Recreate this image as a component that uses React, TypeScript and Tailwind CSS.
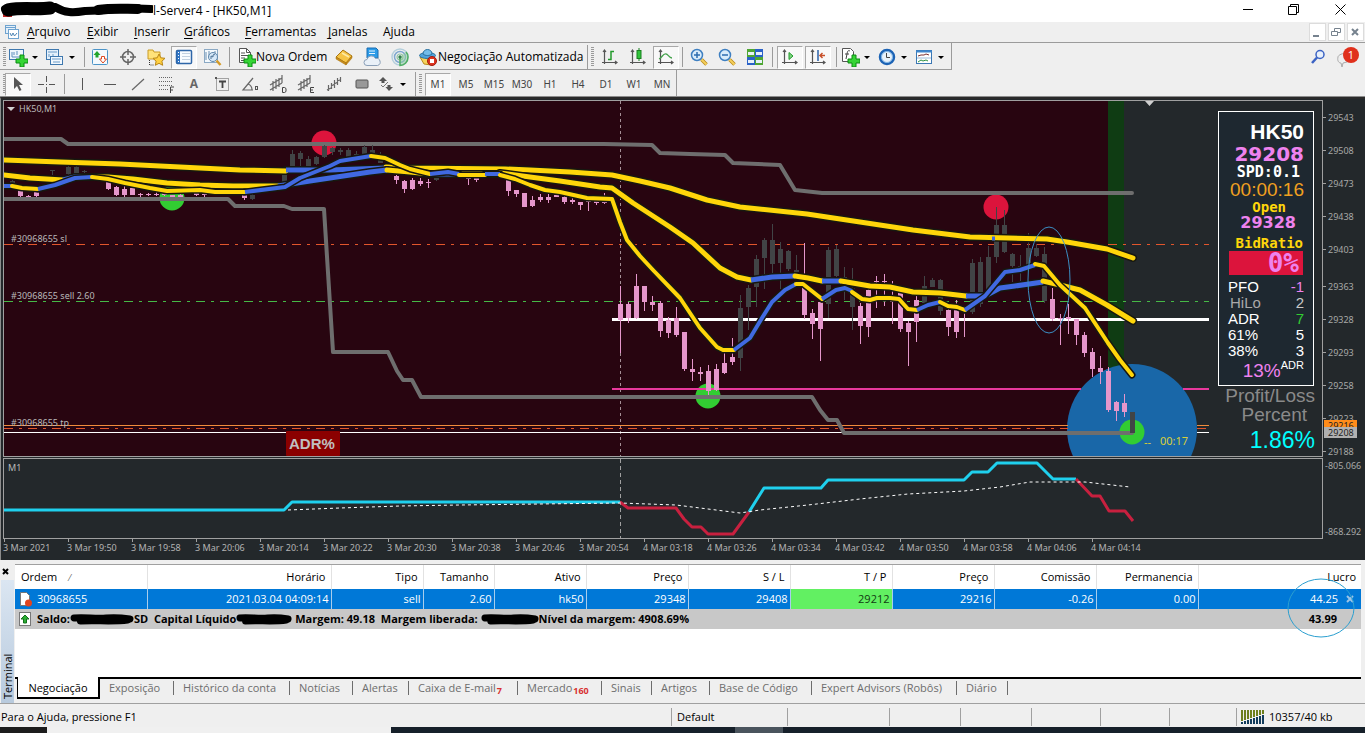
import { ReactNode } from 'react'

type Candle = [x: number, top: number, bottom: number, high: number, low: number]
type Segment = [color: 'y' | 'b', points: string]

const UP = '#414446'
const DOWN = '#e596cb'

const upCandles: Candle[] = [
  [12, 181, 183, 180, 184],
  [52, 170, 171, 170, 175],
  [68, 167, 174, 166, 176],
  [76, 167, 173, 166, 174],
  [84, 171, 172, 170, 173],
  [252, 195, 199, 194, 200],
  [284, 175, 182, 172, 182],
  [292, 154, 166, 150, 167],
  [300, 153, 159, 151, 166],
  [308, 159, 166, 156, 166],
  [316, 157, 164, 156, 165],
  [324, 146, 157, 145, 158],
  [332, 148, 152, 147, 155],
  [340, 150, 152, 148, 155],
  [348, 150, 157, 148, 158],
  [356, 154, 155, 151, 158],
  [364, 147, 154, 145, 154],
  [372, 150, 153, 145, 153],
  [380, 158, 163, 152, 163],
  [436, 178, 180, 177, 181],
  [740, 308, 358, 295, 371],
  [748, 288, 307, 285, 330],
  [756, 259, 287, 255, 307],
  [764, 240, 258, 238, 289],
  [772, 240, 264, 224, 273],
  [780, 249, 263, 242, 289],
  [788, 251, 269, 250, 271],
  [796, 270, 272, 255, 273],
  [828, 250, 304, 247, 318],
  [836, 249, 276, 245, 277],
  [844, 277, 279, 267, 300],
  [852, 288, 307, 268, 330],
  [924, 286, 303, 276, 304],
  [932, 280, 287, 278, 287],
  [940, 280, 311, 279, 315],
  [972, 263, 312, 259, 314],
  [980, 262, 304, 257, 307],
  [988, 257, 290, 246, 291],
  [996, 225, 257, 207, 263],
  [1004, 225, 252, 210, 253],
  [1012, 254, 266, 253, 282],
  [1020, 266, 268, 255, 281],
  [1028, 248, 265, 233, 266],
  [1036, 248, 256, 244, 257],
  [1044, 254, 301, 247, 303],
]

const downCandles: Candle[] = [
  [20, 190, 196, 189, 197],
  [28, 196, 197, 195, 197],
  [36, 192, 196, 191, 198],
  [108, 182, 189, 181, 190],
  [116, 187, 195, 186, 196],
  [124, 189, 195, 186, 197],
  [132, 188, 195, 188, 195],
  [140, 194, 195, 193, 197],
  [148, 194, 195, 193, 196],
  [156, 194, 195, 192, 196],
  [164, 193, 195, 193, 196],
  [172, 195, 198, 195, 198],
  [180, 195, 198, 194, 198],
  [196, 193, 195, 193, 196],
  [204, 194, 195, 194, 197],
  [244, 195, 198, 194, 200],
  [396, 176, 180, 175, 184],
  [404, 181, 189, 180, 193],
  [412, 180, 189, 178, 190],
  [420, 181, 184, 178, 186],
  [428, 182, 183, 179, 188],
  [468, 178, 179, 178, 185],
  [476, 178, 180, 178, 182],
  [508, 180, 191, 178, 196],
  [516, 190, 194, 190, 197],
  [524, 193, 207, 193, 207],
  [532, 200, 206, 196, 207],
  [540, 197, 200, 194, 202],
  [548, 197, 200, 194, 203],
  [556, 195, 197, 194, 197],
  [564, 197, 202, 195, 204],
  [572, 200, 202, 198, 204],
  [580, 202, 205, 202, 210],
  [588, 201, 202, 201, 211],
  [596, 201, 203, 200, 205],
  [604, 202, 203, 193, 204],
  [620, 304, 320, 286, 353],
  [628, 304, 318, 302, 323],
  [636, 286, 318, 274, 319],
  [644, 286, 302, 286, 311],
  [652, 302, 305, 296, 311],
  [660, 303, 331, 301, 337],
  [668, 320, 333, 317, 338],
  [676, 318, 335, 307, 337],
  [684, 332, 369, 332, 371],
  [692, 369, 372, 359, 381],
  [700, 372, 374, 367, 381],
  [708, 371, 391, 365, 395],
  [716, 369, 390, 364, 391],
  [724, 363, 373, 353, 374],
  [732, 357, 362, 338, 365],
  [804, 287, 315, 243, 319],
  [812, 313, 324, 309, 339],
  [820, 302, 329, 300, 361],
  [860, 306, 326, 303, 344],
  [868, 290, 327, 288, 337],
  [876, 281, 282, 276, 308],
  [884, 281, 282, 274, 306],
  [892, 301, 302, 281, 324],
  [900, 293, 329, 292, 332],
  [908, 323, 332, 321, 366],
  [916, 300, 322, 295, 342],
  [948, 310, 327, 306, 336],
  [956, 310, 332, 300, 338],
  [964, 308, 309, 306, 337],
  [1052, 299, 319, 288, 321],
  [1060, 318, 319, 314, 345],
  [1068, 317, 319, 304, 334],
  [1076, 319, 335, 319, 345],
  [1084, 335, 353, 332, 357],
  [1092, 352, 369, 348, 377],
  [1100, 368, 372, 356, 384],
  [1108, 371, 410, 367, 412],
  [1116, 402, 411, 401, 421],
  [1124, 403, 412, 394, 417],
]

const slowAverage: Segment[] = [
  ['y', '4,160 60,162 120,164 180,167 240,170 286,171'],
  ['b', '286,170 330,170 386,168'],
  ['y', '386,167 410,168 505,169 530,170 570,172 612,175 640,181 670,188 707,200 740,207 807,214 860,222 913,230 970,237 1047,239 1067,242 1107,249 1133,258'],
]

const midAverage: Segment[] = [
  ['y', '4,175 30,178 63,180'],
  ['b', '63,180 75,177 92,177'],
  ['y', '92,177 108,177 133,179 167,183 200,185 233,186 278,186'],
  ['b', '278,186 310,181 330,178 370,172 387,170'],
  ['y', '387,170 410,172 430,174'],
  ['b', '430,174 459,174'],
  ['y', '459,174 485,174'],
  ['b', '485,174 500,174'],
  ['y', '500,173 530,177 560,181 600,187 612,188 633,203 670,227 693,243 720,268 737,277 751,280'],
  ['b', '751,280 772,277 795,276'],
  ['y', '795,276 808,278 822,281'],
  ['b', '822,281 841,281'],
  ['y', '841,281 870,286 890,287 913,292 940,293 966,296'],
  ['b', '966,296 985,296 1000,288 1015,286 1043,282'],
  ['y', '1043,281 1060,285 1080,290 1107,305 1133,321'],
]

const fastAverage: Segment[] = [
  ['b', '4,186 12,186'],
  ['y', '12,186 22,188 38,189'],
  ['b', '38,189 55,185 75,178 92,177'],
  ['y', '92,177 108,179 125,183 150,188 167,191 200,190 215,192 245,192'],
  ['b', '245,192 285,187 300,178 330,166 340,161 371,156'],
  ['y', '371,156 385,158 400,165 410,169 430,174'],
  ['b', '430,174 448,172 459,174'],
  ['y', '459,175 485,175'],
  ['b', '485,174 500,174'],
  ['y', '500,175 515,179 530,185 545,190 560,192 587,198 612,199 620,222 627,240 640,256 653,270 680,298 700,328 717,347 723,350 734,350'],
  ['b', '734,350 750,338 762,318 772,302 785,290 796,284'],
  ['y', '796,284 803,284 822,299'],
  ['b', '822,299 836,290 845,288 852,291'],
  ['y', '852,292 862,299 870,300 877,298 890,298 899,299 908,309 917,310'],
  ['b', '917,310 928,305 940,302'],
  ['y', '940,302 948,306 957,307 965,310'],
  ['b', '965,310 985,296 1005,272 1020,270 1035,265'],
  ['y', '1035,264 1044,266 1060,285 1085,308 1108,343 1120,360 1132,375'],
]

const priceLabels = [
  [29543, 117],
  [29508, 150],
  [29473, 183],
  [29438, 216],
  [29403, 249],
  [29363, 286],
  [29328, 319],
  [29293, 352],
  [29258, 385],
  [29223, 418],
  [29188, 451],
]

const timeLabels = [
  '3 Mar 2021',
  '3 Mar 19:50',
  '3 Mar 19:58',
  '3 Mar 20:06',
  '3 Mar 20:14',
  '3 Mar 20:22',
  '3 Mar 20:30',
  '3 Mar 20:38',
  '3 Mar 20:46',
  '3 Mar 20:54',
  '4 Mar 03:18',
  '4 Mar 03:26',
  '4 Mar 03:34',
  '4 Mar 03:42',
  '4 Mar 03:50',
  '4 Mar 03:58',
  '4 Mar 04:06',
  '4 Mar 04:14',
]

/* ---------- icons ---------- */

function Icon({ children, size = 'h-5 w-5' }: { children: ReactNode; size?: string }) {
  return (
    <svg viewBox="0 0 20 20" className={`${size} shrink-0`} fill="none" aria-hidden="true">
      {children}
    </svg>
  )
}

const Plus = () => (
  <path d="M12 8h4v4h4v4h-4v4h-4v-4H8v-4h4z" fill="#35d435" stroke="#0b8a12" />
)

const NewChartIcon = () => (
  <Icon>
    <rect x="1.5" y="2.5" width="14" height="10" fill="#eef6fd" stroke="#3f78ae" />
    <path d="M4 5v5h9M6 5v3M9 4v4" stroke="#5c8fbd" />
    <Plus />
  </Icon>
)

const ProfilesIcon = () => (
  <Icon>
    <rect x="1.5" y="2.5" width="12" height="10" fill="#e4f0fb" stroke="#3f78ae" />
    <path d="M3 5h9M4 7v3M8 7v3" stroke="#6a9bc8" />
    <rect x="5.500" y="9.500" width="12" height="8" fill="#f2f8fe" stroke="#3f78ae" />
    <path d="M7 12h9M8 15h7" stroke="#6a9bc8" />
  </Icon>
)

const MarketWatchIcon = () => (
  <Icon>
    <rect x="2.500" y="2.500" width="15" height="15" rx="1" fill="#f4f9fd" stroke="#4c94c8" />
    <path d="M7 4l3.500 4H8.500v2.500h-3V8H3.500z" fill="#24a52c" />
    <path d="M13 16l-3.500-4h2V9.500h3V12h2z" fill="#fff" stroke="#dd4a22" />
  </Icon>
)

const TargetIcon = () => (
  <Icon>
    <circle cx="10" cy="10" r="5.500" stroke="#666" strokeWidth="1.500" />
    <path d="M10 2v6M10 12v6M2 10h6M12 10h6" stroke="#666" strokeWidth="1.500" />
  </Icon>
)

const FavoritesIcon = () => (
  <Icon>
    <path d="M2 3h5l1 2h6v7H2z" fill="#ffe27a" stroke="#c99a24" />
    <path d="M3.500 13v5h4" stroke="#333" strokeDasharray="1 1" />
    <path d="M13 7l1.800 3.800 4.200.5-3.100 2.900.8 4.100L13 16.300l-3.700 2 .8-4.100L7 11.300l4.200-.5z" fill="#ffd042" stroke="#b98616" />
  </Icon>
)

const TerminalIcon = () => (
  <Icon>
    <rect x="2.500" y="3.500" width="15" height="13" rx="1" fill="#f7fbff" stroke="#2e66a8" strokeWidth="1.500" />
    <rect x="3" y="4" width="3" height="12" fill="#2f74c4" />
    <path d="M8 6.500h8M8 9.500h8M8 12.500h8" stroke="#c1d0e0" />
    <path d="M4.500 5v10" stroke="#fff" strokeDasharray="1 2" />
  </Icon>
)

const TesterIcon = () => (
  <Icon>
    <rect x="2.500" y="2.500" width="13" height="13" fill="#f4f9fd" stroke="#8ba9c4" />
    <path d="M4 5v8M7 4v6M13 4v5" stroke="#6a8fb2" />
    <circle cx="11" cy="10" r="4.500" fill="#cfe5f7" fillOpacity=".8" stroke="#5f87ab" />
    <path d="M9 12V9l2 1V8l2-1" stroke="#4d7396" />
    <path d="M14.500 13.500l4 4.500" stroke="#d49a27" strokeWidth="2.500" />
  </Icon>
)

const NewOrderIcon = () => (
  <Icon>
    <path d="M3.500 1.500h7l4 4v10h-11z" fill="#fff" stroke="#555" />
    <path d="M10.500 1.500v4h4M5 6h4M5 8.500h7M5 11h4M5 13.500h3" stroke="#555" />
    <Plus />
  </Icon>
)

const BookIcon = () => (
  <Icon>
    <path d="M9 3l9 6-6 7-10-6z" fill="#f6c445" stroke="#a87512" />
    <path d="M2 10v2l10 6v-2zM12 16v2l6-7V9z" fill="#c98d1a" stroke="#a87512" strokeWidth=".5" />
    <path d="M8 6l7 4" stroke="#fdeaa6" strokeWidth="1.500" />
  </Icon>
)

const CloudIcon = () => (
  <Icon>
    <path d="M5 1h9l2 2v8H5z" fill="#2b9be8" stroke="#1a6db0" />
    <path d="M7 4h6M7 6.500h6" stroke="#e6f4ff" />
    <path d="M5 18.500a3 3 0 0 1 0-6 4.500 4.500 0 0 1 8.500-1 3.500 3.500 0 0 1 2 7z" fill="#e9f0f8" stroke="#8a9fb8" />
  </Icon>
)

const SignalIcon = () => (
  <Icon>
    <circle cx="10" cy="10" r="8" stroke="#b4cfdc" strokeWidth="1.500" />
    <circle cx="10" cy="10" r="5.500" stroke="#7ea7cf" strokeWidth="1.500" />
    <circle cx="10" cy="10" r="3" stroke="#8fc3a3" strokeWidth="1.200" />
    <path d="M10 10v8.500c4 0 8-3 8-8.500 0-2-1-4-2-5" fill="#8fd09c" fillOpacity=".5" stroke="#4fae64" strokeWidth="1.500" />
    <circle cx="10" cy="10" r="1.700" fill="#2e7d4d" />
  </Icon>
)

const AutoTradingIcon = () => (
  <Icon>
    <path d="M2 10h14l-3 8-7-1z" fill="#f5d35a" stroke="#b98a1c" />
    <ellipse cx="9.500" cy="8.500" rx="8" ry="3" fill="#4ea3dc" stroke="#2a719f" />
    <path d="M5 7c0-6 9-6 9 0-2 2-7 2-9 0z" fill="#74bdea" stroke="#2a719f" />
    <circle cx="14" cy="14" r="4.500" fill="#dc3420" stroke="#a31a0d" />
    <rect x="12" y="12" width="4" height="4" fill="#fff" />
  </Icon>
)

const Axes = () => (
  <path d="M4.500 3v14M2 15.500h15M3 5l1.500-2L6 5M15 14l2 1.500-2 1.500" stroke="#555" strokeWidth="1.200" />
)

const BarsIcon = () => (
  <Icon>
    <Axes />
    <path d="M8 12.500h3v-8h3" stroke="#239a2c" strokeWidth="1.500" />
  </Icon>
)

const CandlesIcon = () => (
  <Icon>
    <Axes />
    <path d="M11 1v13" stroke="#19801f" />
    <rect x="9" y="3.500" width="4" height="8" fill="#32c43c" stroke="#19801f" />
  </Icon>
)

const LineIcon = () => (
  <Icon>
    <Axes />
    <path d="M3 12c3-1 4-6 7-5 2 0 3 4 6 4" stroke="#45a24c" strokeWidth="1.300" />
  </Icon>
)

function ZoomIcon({ plus = false }) {
  return (
    <Icon>
      <path d="M12.500 12.500l5 5" stroke="#b98a1c" strokeWidth="3.500" />
      <path d="M12.500 12.500l5 5" stroke="#f5cf5c" strokeWidth="2" />
      <circle cx="8" cy="8" r="5.500" fill="#d9ecfb" stroke="#3e7fc1" strokeWidth="1.500" />
      <path d={plus ? 'M5 8h6M8 5v6' : 'M5 8h6'} stroke="#2c6cb0" strokeWidth="1.500" />
    </Icon>
  )
}

const TileIcon = () => (
  <Icon>
    <rect x="2" y="2" width="8" height="8" fill="#4ea633" />
    <rect x="10" y="2" width="8" height="8" fill="#2a62c8" />
    <rect x="2" y="10" width="8" height="8" fill="#2a62c8" />
    <rect x="10" y="10" width="8" height="8" fill="#4ea633" />
    <path d="M3 5h6v3H3zM11 5h6v3h-6zM3 13h6v3H3zM11 13h6v3h-6z" fill="#e8f1f8" />
  </Icon>
)

const ScrollIcon = () => (
  <Icon>
    <Axes />
    <path d="M9 5.500v7l4-3.500z" fill="#7bd47f" stroke="#239a2c" />
  </Icon>
)

const ShiftIcon = () => (
  <Icon>
    <Axes />
    <path d="M10 3v11" stroke="#2b62a8" strokeWidth="1.500" />
    <path d="M12 8.500h5M14.500 6L12 8.500l2.500 2.500" stroke="#c8502a" strokeWidth="1.500" />
  </Icon>
)

const IndicatorsIcon = () => (
  <Icon>
    <path d="M2.500 1.500h8l3 3v10h-11z" fill="#fff" stroke="#555" />
    <path d="M10 4C8 3 7.500 4 7 7l-1 5M5 7h4" stroke="#444" />
    <Plus />
  </Icon>
)

const ClockIcon = () => (
  <Icon>
    <circle cx="10" cy="10" r="7" fill="#e9f2fa" stroke="#1c63b5" strokeWidth="2.500" />
    <circle cx="10" cy="10" r="5.500" stroke="#7db4e6" />
    <path d="M9.500 6v4.500H13" stroke="#444" />
  </Icon>
)

const TemplateIcon = () => (
  <Icon>
    <rect x="2.500" y="3.500" width="15" height="13" fill="#fff" stroke="#3b77b3" />
    <path d="M2 4.500h16" stroke="#3f86cc" strokeWidth="2" />
    <path d="M4 9l3-1h3l2-1 3 1" stroke="#7a3030" />
    <path d="M3 11h14" stroke="#9dbbd8" />
    <path d="M4 15l3-2 2 1 3-1 2 1" stroke="#2d9140" />
  </Icon>
)

const CursorIcon = () => (
  <Icon>
    <path d="M6 3v12l3-3 2.500 5 2-1-2.500-5h4z" fill="#555" />
  </Icon>
)

const CrosshairIcon = () => (
  <Icon>
    <path d="M10.500 2v6M10.500 13v6M2 10.500h6M13 10.500h6M10 10.500h1" stroke="#555" />
  </Icon>
)

const FiboIcon = () => (
  <Icon>
    <path d="M3 3.500h14M3 7.500h14M3 11.500h14M3 15.500h9" stroke="#666" strokeDasharray="1 1" />
    <path d="M14.500 19v-6H18M14.500 16H17" stroke="#444" />
  </Icon>
)

const TextLabelIcon = () => (
  <Icon>
    <rect x="4.500" y="4.500" width="12" height="12" stroke="#555" strokeDasharray="1 1" />
    <path d="M7 7.500h7M10.500 7v7" stroke="#444" strokeWidth="1.800" />
    <path d="M3 3h2v2H3z" fill="#555" />
  </Icon>
)

const AngleIcon = () => (
  <Icon>
    <path d="M13 4L3 16h10M8 10c3 1 4 3 4 6" stroke="#666" strokeWidth="1.200" />
    <rect x="15.500" y="12.500" width="2" height="3" stroke="#555" />
  </Icon>
)

function ChannelIcon({ mark }: { mark?: 'D' | 'E' }) {
  return (
    <Icon>
      <path d="M2 11L14 4M2 16L14 9M5 7v10M8 5v10M11 4v9M14 1v8" stroke="#666" strokeWidth="1.200" />
      {mark === 'D' && <path d="M14.500 13.500v5h2l1.500-1v-3l-1.500-1z" stroke="#444" />}
      {mark === 'E' && <path d="M18 13.500h-3.500v5H18M14.500 16H17" stroke="#444" />}
    </Icon>
  )
}

const WavesIcon = () => (
  <Icon>
    <path d="M4.500 17v-6M3 16l4-2M7.500 15V9M7 12l4-2M10.500 14V6M10 10l4-2M13.500 11V4M13 7l3-1M16.500 8V3" stroke="#666" strokeWidth="1.200" />
  </Icon>
)

const ArrowsIcon = () => (
  <Icon>
    <path d="M3 7l4-4 4 4H8.500v2h-3V7z" fill="#555" />
    <path d="M9.500 13h2v-2h3v2h2.500l-4 4z" fill="#555" />
    <path d="M5 11l2 2 5-5" stroke="#777" />
  </Icon>
)

/* ---------- toolbar pieces ---------- */

const Grip = () => (
  <span className="flex h-6 w-2 shrink-0 items-center justify-center" aria-hidden="true">
    <span className="h-5 w-[3px] bg-[repeating-linear-gradient(#9a9a9a_0_1px,#efefef_1px_2px)]" />
  </span>
)

function Sep({ width = 'w-1' }: { width?: string }) {
  return (
    <span className={`${width} flex h-6 shrink-0 items-center justify-center`} aria-hidden="true">
      <span className="h-5 w-px bg-[#9b9b9b]" />
    </span>
  )
}

interface ToolProps {
  label: string
  active?: boolean
  menu?: boolean
  children: ReactNode
}

function Tool({ label, active, menu, children }: ToolProps) {
  return (
    <button
      aria-label={label}
      aria-pressed={active}
      className={`flex h-6 shrink-0 items-center ${menu ? 'w-[37px] justify-start' : 'w-7 justify-center'}`}
    >
      {active ? (
        <span className="flex h-[23px] w-[26px] items-center justify-center border border-[#a8a8a8] border-r-white border-b-white bg-[#f8f8f8]">
          {children}
        </span>
      ) : (
        children
      )}
      {menu && (
        <span className="ml-1 border-x-[3px] border-t-[3px] border-x-transparent border-t-black" />
      )}
    </button>
  )
}

function TitleBar() {
  return (
    <header className="flex h-[22px] items-center justify-between bg-white">
      <div className="flex items-center">
        <svg className="h-[22px] w-[153px]" aria-hidden="true">
          <path d="M3 13h9v4H3z" fill="#c42424" />
          <path
            d="M5 9c15-4 35-2 50-2 10 6 18 6 30 4 20 0 25-2 38-3l28 1"
            fill="none"
            stroke="#000"
            strokeWidth="8"
            strokeLinecap="round"
          />
          <path d="M8 10c16-3 28 0 42-2" fill="none" stroke="#000" strokeWidth="13" strokeLinecap="round" />
          <path d="M98 10c14-2 26-1 40-1" fill="none" stroke="#000" strokeWidth="10" strokeLinecap="round" />
        </svg>
        <h1 className="text-xs leading-4">l-Server4 - [HK50,M1]</h1>
      </div>
      <div className="flex items-center pr-px pb-1">
        <button aria-label="Minimizar" className="flex w-[46px] justify-center">
          <span className="h-px w-[10px] bg-black" />
        </button>
        <button aria-label="Restaurar" className="flex w-[45px] justify-center">
          <svg className="h-[11px] w-[11px]" fill="none" stroke="#000">
            <path d="M.5 2.500h8v8h-8zM2.500 2.500v-2h8v8h-2" />
          </svg>
        </button>
        <button aria-label="Fechar" className="flex w-12 justify-center">
          <svg className="h-[11px] w-[11px]" fill="none" stroke="#000">
            <path d="M.5.5l10 10M10.500.5l-10 10" />
          </svg>
        </button>
      </div>
    </header>
  )
}

function MenuBar() {
  const items = [
    ['A', 'rquivo', 'w-[60px]'],
    ['E', 'xibir', 'w-[47px]'],
    ['I', 'nserir', 'w-[50px]'],
    ['G', 'ráficos', 'w-[61px]'],
    ['F', 'erramentas', 'w-[83px]'],
    ['J', 'anelas', 'w-[55px]'],
    ['', 'Ajuda', 'w-[50px]'],
  ]
  return (
    <nav className="flex h-[21px] items-center border-b border-[#9b9b9b]">
      <svg viewBox="0 0 16 16" className="mr-[7px] ml-1 h-4 w-4" fill="none" aria-hidden="true">
        <rect x="1.500" y="1.500" width="10" height="8" fill="#e4f0fb" stroke="#6fa3cf" />
        <path d="M1 3.500h11" stroke="#6fa3cf" />
        <rect x="4.500" y="5.500" width="10" height="9" fill="#fff" stroke="#6fa3cf" />
        <path d="M6 9l1.500 3L9 9l1.500 3L13 9" stroke="#4d84b3" />
      </svg>
      {items.map(([key, rest, width]) => (
        <button key={rest} className={`${width} text-left text-xs leading-4`}>
          <u className="underline-offset-2">{key}</u>
          {rest}
        </button>
      ))}
      <div className="ml-auto flex gap-[2px] pr-px">
        {['M3 12h6', 'M2.500 7.500h6v4h-6zM5.500 7v-2.500h6v4h-3', 'M4 5l6 6M10 5l-6 6'].map((d, i) => (
          <button
            key={d}
            aria-label={['Minimizar gráfico', 'Restaurar gráfico', 'Fechar gráfico'][i]}
            className="h-[18px] w-[17px] border border-[#dcdcdc] bg-white"
          >
            <svg viewBox="0 0 15 16" className="h-4 w-[15px]" fill="none" stroke="#76828e">
              <path d={d} strokeWidth={i === 1 ? 1 : 2} />
            </svg>
          </button>
        ))}
      </div>
    </nav>
  )
}

function Toolbars() {
  const frames = ['M1', 'M5', 'M15', 'M30', 'H1', 'H4', 'D1', 'W1', 'MN']
  return (
    <div className="flex justify-between border-b border-[#8c8c8c]">
      <div>
        <div className="flex h-[27px] w-max items-start border-r border-b border-[#9b9b9b] pt-[2px]">
          <Grip />
          <Tool label="Novo gráfico" menu><NewChartIcon /></Tool>
          <Tool label="Perfis" menu><ProfilesIcon /></Tool>
          <Sep />
          <Tool label="Observação do mercado"><MarketWatchIcon /></Tool>
          <Tool label="Janela de dados"><TargetIcon /></Tool>
          <Tool label="Navegador"><FavoritesIcon /></Tool>
          <Tool label="Terminal" active><TerminalIcon /></Tool>
          <Tool label="Testador de estratégia"><TesterIcon /></Tool>
          <Sep width="w-[6px]" />
          <button className="flex h-6 w-[98px] items-center pl-1 text-xs whitespace-nowrap">
            <NewOrderIcon />
            Nova Ordem
          </button>
          <Tool label="MetaEditor"><BookIcon /></Tool>
          <Tool label="Hospedagem virtual"><CloudIcon /></Tool>
          <Tool label="Sinais"><SignalIcon /></Tool>
          <button className="flex h-6 w-[173px] items-center pl-1 text-xs whitespace-nowrap">
            <AutoTradingIcon />
            Negociação Automatizada
          </button>
          <span className="h-6 w-px bg-[#9b9b9b]" />
          <Grip />
          <Tool label="Gráfico de barras"><BarsIcon /></Tool>
          <Tool label="Candlesticks"><CandlesIcon /></Tool>
          <Tool label="Gráfico de linha" active><LineIcon /></Tool>
          <Sep width="w-[5px]" />
          <Tool label="Aumentar zoom"><ZoomIcon plus /></Tool>
          <Tool label="Diminuir zoom"><ZoomIcon /></Tool>
          <Tool label="Lado a lado"><TileIcon /></Tool>
          <Sep width="w-[7px]" />
          <Tool label="Rolagem automática" active><ScrollIcon /></Tool>
          <Tool label="Deslocar gráfico" active><ShiftIcon /></Tool>
          <Sep width="w-2" />
          <Tool label="Indicadores" menu><IndicatorsIcon /></Tool>
          <Tool label="Períodos" menu><ClockIcon /></Tool>
          <Tool label="Modelos" menu><TemplateIcon /></Tool>
        </div>
        <div className="flex h-[26px] w-max items-start border-r border-[#9b9b9b] pt-[2px]">
          <span className="-mr-1 flex"><Grip /></span>
          <Tool label="Cursor" active><CursorIcon /></Tool>
          <Tool label="Mira"><CrosshairIcon /></Tool>
          <Sep width="w-2" />
          <Tool label="Linha vertical"><Icon><path d="M10.500 4v12" stroke="#555" /></Icon></Tool>
          <Tool label="Linha horizontal"><Icon><path d="M4 10.500h12" stroke="#555" /></Icon></Tool>
          <Tool label="Linha de tendência"><Icon><path d="M4 16L16 5" stroke="#666" strokeWidth="1.200" /></Icon></Tool>
          <Tool label="Fibonacci"><FiboIcon /></Tool>
          <Tool label="Texto"><span className="text-xs font-bold text-[#666]">A</span></Tool>
          <Tool label="Etiqueta"><TextLabelIcon /></Tool>
          <Tool label="Ângulo"><AngleIcon /></Tool>
          <Tool label="Canal D"><ChannelIcon mark="D" /></Tool>
          <Tool label="Canal E"><ChannelIcon mark="E" /></Tool>
          <Tool label="Ondas"><WavesIcon /></Tool>
          <Tool label="Retângulo">
            <Icon><rect x="4" y="6" width="12" height="8" rx="1" fill="#999" stroke="#555" /></Icon>
          </Tool>
          <Tool label="Setas" menu><ArrowsIcon /></Tool>
          <span className="ml-[2px] h-6 w-px bg-[#9b9b9b]" />
          <Grip />
          {frames.map((f) => (
            <Tool key={f} label={f} active={f === 'M1'}>
              <span className="font-['Noto_Sans',sans-serif] text-[10px] text-[#444]">{f}</span>
            </Tool>
          ))}
        </div>
      </div>
      <div className="flex items-start gap-2 pt-[5px] pr-[6px]">
        <button aria-label="Pesquisar">
          <svg viewBox="0 0 18 18" className="h-[18px] w-[18px]" fill="none" stroke="#3b63c4" strokeWidth="1.500">
            <circle cx="11" cy="6.500" r="4" fill="#e8f0fb" />
            <path d="M8 9.500L3 15" strokeWidth="2.500" />
          </svg>
        </button>
        <button aria-label="Mensagens" className="relative h-5 w-6">
          <svg viewBox="0 0 24 20" className="h-5 w-6" fill="none">
            <path d="M3 9c0-2 5-4 9-4v9l-4 1-1 4-1-4c-2 0-4-2-3-6z" fill="#eee" stroke="#aaa" />
          </svg>
          <span className="absolute -top-px right-0 h-4 w-4 rounded-full bg-[#e0301c] text-center text-[11px] leading-4 text-white">
            1
          </span>
        </button>
      </div>
    </div>
  )
}

/* ---------- chart ---------- */

function Average({ segments, width }: { segments: Segment[]; width: number }) {
  return (
    <g fill="none" strokeLinejoin="round">
      {segments.map(([, points]) => (
        <polyline key={points} points={points} stroke="#171810" strokeWidth={width + 3} strokeLinecap="round" />
      ))}
      {segments.map(([color, points]) => (
        <polyline
          key={points}
          points={points}
          stroke={color === 'y' ? '#ffd60a' : '#4169e1'}
          strokeWidth={width}
          strokeLinecap={color === 'y' ? 'round' : 'butt'}
        />
      ))}
    </g>
  )
}

function Candles({ data, color }: { data: Candle[]; color: string }) {
  return (
    <g fill={color} shapeRendering="crispEdges">
      {data.map(([x, top, bottom, high, low]) => (
        <g key={x}>
          <rect x={x} y={high} width="1" height={low - high} />
          <rect x={x - 2} y={top} width="5" height={bottom - top} />
        </g>
      ))}
    </g>
  )
}

function PriceChart() {
  return (
    <svg className="block h-[355px] w-full" role="img" aria-label="HK50,M1">
      <g transform="translate(-4 -101)">
        <rect x="4" y="101" width="1104" height="356" fill="#280510" />
        <rect x="1108" y="101" width="16" height="356" fill="#0f3c13" />
        <path d="M620.500 101v356" stroke="#a58f96" strokeDasharray="3 3" />
        <circle cx="1132" cy="429" r="65" fill="#1967a8" />
        <circle cx="172" cy="198" r="12.500" fill="#32cd32" />
        <circle cx="708" cy="396" r="12.500" fill="#32cd32" />
        <circle cx="1132" cy="432" r="12.500" fill="#32cd32" />
        <circle cx="324" cy="143" r="12.500" fill="#dc143c" />
        <circle cx="996" cy="207" r="12.500" fill="#dc143c" />
        <g strokeDasharray="9 6 3 6" shapeRendering="crispEdges">
          <path d="M4 244.500h1205" stroke="#e2562c" />
          <path d="M4 301.500h1205" stroke="#46b946" />
          <path d="M4 428.500h1064M1197 428.500h12" stroke="#e2562c" />
        </g>
        <g shapeRendering="crispEdges">
          <path d="M4 425.500h1064M1197 425.500h12" stroke="#f08c3c" />
          <path d="M4 432.500h1064M1197 432.500h12" stroke="#fff" />
        </g>
        <path d="M612 319.500h597" stroke="#fff" strokeWidth="3" />
        <path d="M612 389h469M1183 389h26" stroke="#e8389c" strokeWidth="2" />
        <g fill="none" stroke="#6e6e6e" strokeWidth="4" strokeLinejoin="round" strokeLinecap="round">
          <polyline points="4,139 61,139 68,144 604,144 652,145 660,153 690,154 725,155 733,163 780,165 795,190 822,193 1132,193" />
        </g>
        <Candles data={upCandles} color={UP} />
        <Candles data={downCandles} color={DOWN} />
        <polyline
          points="4,199 228,199 235,206 284,206 292,209 324,209 333,352 388,352 397,371 403,380 412,380 421,397 812,397 820,410 828,420 837,420 844,433 1132,433"
          fill="none"
          stroke="#6e6e6e"
          strokeWidth="4"
          strokeLinejoin="round"
          strokeLinecap="round"
        />
        <rect x="1130" y="412" width="5" height="21" fill={UP} />
        <Average segments={slowAverage} width={5} />
        <Average segments={midAverage} width={5} />
        <Average segments={fastAverage} width={4} />
        <path d="M992 238.500h3" stroke="#4169e1" strokeWidth="4" />
        <ellipse cx="1049" cy="280" rx="21" ry="53" fill="none" stroke="#3b8fc4" />
        <path d="M7 107h8l-4 4zM1145 101h9l-4.500 5z" fill="#d0d0d0" />
        <rect x="286" y="431" width="54" height="25" rx="1" fill="#8b0000" />
        <g fill="#b8b8b8" className="font-['Noto_Sans',sans-serif] text-[9px]">
          <text x="19" y="112">HK50,M1</text>
          <text x="11" y="242">#30968655 sl</text>
          <text x="11" y="299">#30968655 sell 2.60</text>
          <text x="11" y="426">#30968655 tp</text>
        </g>
        <text x="289" y="449" fill="#c0c0c0" className="font-['Liberation_Sans',Arial,sans-serif] text-[15px] font-bold">
          ADR%
        </text>
        <g fill="#d8cf3a" className="font-['Noto_Sans',sans-serif] text-[11px]">
          <text x="1144" y="446">--</text>
          <text x="1160" y="445">00:17</text>
        </g>
      </g>
    </svg>
  )
}

function IndicatorChart() {
  return (
    <svg className="block h-[79px] w-full" role="img" aria-label="M1">
      <g transform="translate(-4 -459)" fill="none">
        <path d="M620.500 459v80" stroke="#a0a0a0" strokeDasharray="4 3" />
        <g strokeWidth="3" strokeLinejoin="round">
          <polyline points="4,510 284,510 292,502 620,502" stroke="#1fd0ee" />
          <polyline points="620,502 628,508 676,508 684,519 692,527 701,527 708,534 733,534 749,512" stroke="#c8203f" />
          <polyline points="749,512 764,488 821,488 828,480 964,480 972,472 988,472 997,463 1037,463 1053,479 1076,479" stroke="#1fd0ee" />
          <polyline points="1076,479 1092,496 1100,496 1109,511 1125,511 1133,521" stroke="#c8203f" />
        </g>
        <polyline
          points="288,510 340,508 400,506 460,505 620,503 676,505 708,509 740,513 760,510 808,505 860,499 908,494 964,491 1000,487 1030,482 1085,482 1130,487"
          stroke="#fff"
          strokeDasharray="3 3"
        />
        <text x="8" y="471" fill="#b8b8b8" className="font-['Noto_Sans',sans-serif] text-[9px]">M1</text>
      </g>
    </svg>
  )
}

function PriceAxis() {
  return (
    <svg className="block h-[438px] w-[42px] font-['Noto_Sans',sans-serif] text-[9px]">
      <g transform="translate(-1323 -100)" fill="#a8a8a8">
        {priceLabels.map(([price, y]) => (
          <g key={price}>
            <path d={`M1323 ${y}.5h3`} stroke="#a0a0a0" />
            <text x="1328" y={y + 4}>{price}</text>
          </g>
        ))}
        <rect x="1324" y="420" width="33" height="11" fill="#ff8c1a" />
        <text x="1328" y="429" fill="#222">29216</text>
        <rect x="1324" y="427" width="33" height="11" fill="#b0b0b0" />
        <text x="1328" y="436" fill="#222">29208</text>
        <text x="1325" y="469">-805.066</text>
        <text x="1325" y="535">-868.292</text>
      </g>
    </svg>
  )
}

function QuotePanel() {
  const rows = [
    ['PFO', '-1', 'text-white', 'text-[#ee82ee]'],
    ['HiLo', '2', 'text-[#a9a9a9] pl-[2px]', 'text-[#c8c8c8]'],
    ['ADR', '7', 'text-white', 'text-[#32cd32]'],
    ['61%', '5', 'text-white', 'text-white'],
    ['38%', '3', 'text-white', 'text-white'],
  ]
  return (
    <aside className="absolute top-[10px] right-[8px] w-[96px] font-['Liberation_Sans',Arial,sans-serif]">
      <div className="h-[275px] border border-white bg-[#1e2830] px-[9px] pt-2 text-right">
        <div className="text-[21px] leading-6 font-bold text-white">HK50</div>
        <div className="font-['DejaVu_Sans',sans-serif] text-[20px] leading-5 font-bold text-[#ee82ee]">29208</div>
        <div className="pr-1 font-['DejaVu_Sans_Mono',monospace] text-[15px] leading-4 font-bold text-white">SPD:0.1</div>
        <div className="text-[19px] leading-5 text-[#f0a020]">00:00:16</div>
        <div className="pr-[18px] font-['DejaVu_Sans_Mono',monospace] text-[14px] leading-[14px] font-bold text-[#ffd60a]">Open</div>
        <div className="pr-2 font-['DejaVu_Sans',sans-serif] text-[16px] leading-[18px] font-bold text-[#ee82ee]">29328</div>
        <div className="pt-1 pr-px font-['DejaVu_Sans_Mono',monospace] text-[14px] leading-[14px] font-bold text-[#ffd60a]">BidRatio</div>
        <div className="mx-px mt-px mb-1 h-6 bg-[#dc143c] pr-1 font-['DejaVu_Sans_Mono',monospace] text-[26px] leading-6 font-bold text-[#ee82ee]">0%</div>
        <dl>
          {rows.map(([name, value, nameColor, valueColor]) => (
            <div key={name} className="flex justify-between text-[15px] leading-4">
              <dt className={nameColor}>{name}</dt>
              <dd className={valueColor}>{value}</dd>
            </div>
          ))}
        </dl>
        <div className="flex items-start justify-end leading-6">
          <span className="text-[19px]/6 text-[#ee82ee]">13%</span>
          <span className="text-[11px] leading-3 text-white">ADR</span>
        </div>
      </div>
      <div className="-mr-px text-right text-[19px] leading-[19px] whitespace-nowrap text-[#8a8a8a]">
        <div>Profit/Loss</div>
        <div className="pr-2">Percent</div>
      </div>
      <div className="-mr-px pt-1 text-right text-[23px] leading-6 text-[#00ffff]">1.86%</div>
    </aside>
  )
}

function ChartArea() {
  return (
    <main className="flex h-[463px] flex-col border-t-2 border-l border-[#2a2a2a] border-l-[#8c8c8c] bg-[#23282b]">
      <div className="flex pt-px pl-[2px]">
        <div className="min-w-0 flex-1">
          <div className="relative overflow-hidden border border-[#a0a0a0]">
            <PriceChart />
            <QuotePanel />
          </div>
          <div className="mt-px border border-[#a0a0a0]">
            <IndicatorChart />
          </div>
        </div>
        <PriceAxis />
      </div>
      <ol className="flex pl-[2px] font-['Noto_Sans',sans-serif] text-[9px] leading-3 text-[#b4b4b4]">
        {timeLabels.map((t) => (
          <li key={t} className="w-16 shrink-0 whitespace-nowrap">
            <span className="ml-px block h-[3px] w-px bg-[#a0a0a0]" />
            <span className="block">{t}</span>
          </li>
        ))}
      </ol>
    </main>
  )
}

/* ---------- terminal ---------- */

function Scribble({ width }: { width: string }) {
  return (
    <svg viewBox="0 0 60 14" preserveAspectRatio="none" className={`${width} h-[14px] shrink-0`} aria-hidden="true">
      <path d="M4 6C14 5 24 7 34 6s16 0 22 1M10 9c14-1 30 1 44-1" fill="none" stroke="#000" strokeWidth="7" strokeLinecap="round" />
    </svg>
  )
}

const columns = [
  ['Ordem', 'w-[132px]'],
  ['Horário', 'w-[184px]'],
  ['Tipo', 'w-[92px]'],
  ['Tamanho', 'w-[71px]'],
  ['Ativo', 'w-[92px]'],
  ['Preço', 'w-[102px]'],
  ['S / L', 'w-[102px]'],
  ['T / P', 'w-[102px]'],
  ['Preço', 'w-[102px]'],
  ['Comissão', 'w-[102px]'],
  ['Permanencia', 'w-[102px]'],
  ['Lucro', ''],
]

function OrdersTable() {
  const cells = ['2021.03.04 04:09:14', 'sell', '2.60', 'hk50', '29348', '29408', '29212', '29216', '-0.26', '0.00']
  return (
    <table className="w-full table-fixed border-collapse text-right text-[11px] leading-4">
      <thead>
        <tr className="h-6">
          {columns.map(([name, width], i) => (
            <th
              key={i}
              scope="col"
              className={`${width} font-normal ${i === 0 ? 'pl-[6px] text-left' : 'pr-[5px]'} ${i < 11 ? 'border-r border-[#e2e2e2]' : ''}`}
            >
              {name}
              {i === 0 && <span className="ml-3 text-[9px] text-[#555]">⁄</span>}
            </th>
          ))}
        </tr>
      </thead>
      <tbody>
        <tr className="h-5 bg-[#0078d7] text-white">
          <td className="border-r border-[#a9cdec] text-left">
            <span className="flex items-center gap-1 pl-[2px]">
              <svg viewBox="0 0 16 16" className="h-4 w-4" fill="none" aria-hidden="true">
                <path d="M3.500 1.500h6l3 3v10h-9z" fill="#fff" stroke="#777" />
                <circle cx="11.500" cy="12" r="3.500" fill="#e2451e" />
              </svg>
              30968655
            </span>
          </td>
          {cells.map((c, i) => (
            <td
              key={i}
              className={`border-r border-[#a9cdec] pr-[2px] ${i === 6 ? 'bg-[#62f062] text-[#123a12]' : ''}`}
            >
              {c}
            </td>
          ))}
          <td>
            <span className="flex items-center justify-end gap-2 pr-[7px]">
              44.25
              <button aria-label="Fechar ordem" className="text-[#9cc4e6]">
                <svg className="h-2 w-2" fill="none" stroke="currentColor" strokeWidth="2">
                  <path d="M1 1l6 6M7 1L1 7" />
                </svg>
              </button>
            </span>
          </td>
        </tr>
        <tr className="h-5 bg-[#c8c8c8] font-bold">
          <td colSpan={11}>
            <span className="flex items-center pl-[2px] whitespace-pre">
              <svg viewBox="0 0 16 16" className="mr-1 h-4 w-4" fill="none" aria-hidden="true">
                <rect x="2.500" y="1.500" width="11" height="13" fill="#fff" stroke="#777" />
                <path d="M8 4l4 4H9.500v4h-3V8H4z" fill="#2cae34" stroke="#12701a" />
              </svg>
              Saldo:
              <Scribble width="w-16" />
              SD  Capital Líquido
              <Scribble width="w-14" />
              {' Margem: 49.18  Margem liberada: '}
              <Scribble width="w-[58px]" />
              Nível da margem: 4908.69%
            </span>
          </td>
          <td className="pr-6">43.99</td>
        </tr>
      </tbody>
    </table>
  )
}

function TerminalTabs() {
  const tabs = [
    ['Exposição', 'w-[74px]'],
    ['Histórico da conta', 'w-[116px]'],
    ['Notícias', 'w-[63px]'],
    ['Alertas', 'w-[56px]'],
    ['Caixa de E-mail', 'w-[109px]', '7'],
    ['Mercado', 'w-[84px]', '160'],
    ['Sinais', 'w-[50px]'],
    ['Artigos', 'w-[58px]'],
    ['Base de Código', 'w-[102px]'],
    ['Expert Advisors (Robôs)', 'w-[145px]'],
    ['Diário', 'w-[51px]'],
  ]
  return (
    <div role="tablist" className="flex h-[26px] items-start border-t-2 border-black bg-[#efefef] pl-[2px] text-[11px] text-[#6d6d6d]">
      <button role="tab" aria-selected="true" className="-mt-[2px] h-[22px] w-[83px] border-r-2 border-b-2 border-l border-black bg-white pt-[2px] text-black">
        Negociação
      </button>
      {tabs.map(([name, width, count]) => (
        <button
          key={name}
          role="tab"
          aria-selected="false"
          className={`${width} mt-[2px] h-[14px] border-r border-[#6d6d6d] pl-[9px] text-left leading-3 whitespace-nowrap`}
        >
          {name}
          {count && <sub className="ml-px text-[9px] font-bold text-[#d83030]">{count}</sub>}
        </button>
      ))}
    </div>
  )
}

function TerminalPanel() {
  return (
    <section className="relative flex flex-1 border-b border-[#a0a0a0] pt-1 pr-1">
      <div className="flex w-[15px] shrink-0 flex-col items-center">
        <button aria-label="Fechar terminal" className="h-4 pr-1">
          <svg className="h-2 w-2" stroke="#000" strokeWidth="2" fill="none">
            <path d="M1 1l5 5M6 1L1 6" />
          </svg>
        </button>
        <div className="flex w-[13px] flex-1 items-start bg-gradient-to-b from-[#dbe6f2] to-[#b8cadd]">
          <span className="rotate-180 self-stretch pt-1 text-left text-[11px] leading-[13px] [writing-mode:vertical-rl]">Terminal</span>
        </div>
      </div>
      <div className="flex min-w-0 flex-1 flex-col border-t border-[#a0a0a0] bg-white">
        <OrdersTable />
        <div className="flex-1" />
        <TerminalTabs />
      </div>
      <svg className="pointer-events-none absolute top-[18px] right-[10px] h-[60px] w-[68px]" aria-hidden="true">
        <ellipse cx="34" cy="30" rx="33" ry="29" fill="none" stroke="#2b9fd0" />
      </svg>
    </section>
  )
}

function StatusBar() {
  const cells = ['w-[102px]', 'w-[71px]', 'w-[71px]', 'w-[69px]', 'w-[69px]', 'w-[67px]']
  return (
    <footer className="text-[11px]">
      <div className="flex h-[23px] items-center pt-[3px]">
        <span className="flex-1 pl-px">Para o Ajuda, pressione F1</span>
        <span className="h-[18px] w-[116px] border-l border-[#a0a0a0] pl-[5px] leading-[18px]">Default</span>
        {cells.map((w, i) => (
          <span key={i} className={`${w} h-[18px] border-l border-[#a0a0a0]`} />
        ))}
        <span className="flex h-[18px] w-[129px] items-center gap-1 border-l border-[#a0a0a0] pl-1">
          <svg viewBox="0 0 24 14" className="h-[14px] w-6" aria-hidden="true">
            {[0, 3, 6, 9, 12, 15, 18, 21].map((x, i) => (
              <g key={x}>
                <rect x={x} y="0" width="2" height={11 - i} fill="#6d7f1c" />
                <rect x={x} y={12 - i} width="2" height={2 + i} fill="#123c5c" />
              </g>
            ))}
          </svg>
          10357/40 kb
        </span>
      </div>
      <div className="flex h-[6px] bg-[#16202a]">
        <span className="w-[47px] bg-[#1c1c1c]" />
        <span className="w-[344px] bg-[#f0f0f0]" />
        <span className="ml-[344px] w-12 bg-[#4a545d]" />
      </div>
    </footer>
  )
}

export default function App() {
  return (
    <div className="flex min-h-screen flex-col overflow-hidden bg-[#efefef] font-['Open_Sans','Noto_Sans',sans-serif] text-black">
      <TitleBar />
      <MenuBar />
      <Toolbars />
      <ChartArea />
      <TerminalPanel />
      <StatusBar />
    </div>
  )
}
